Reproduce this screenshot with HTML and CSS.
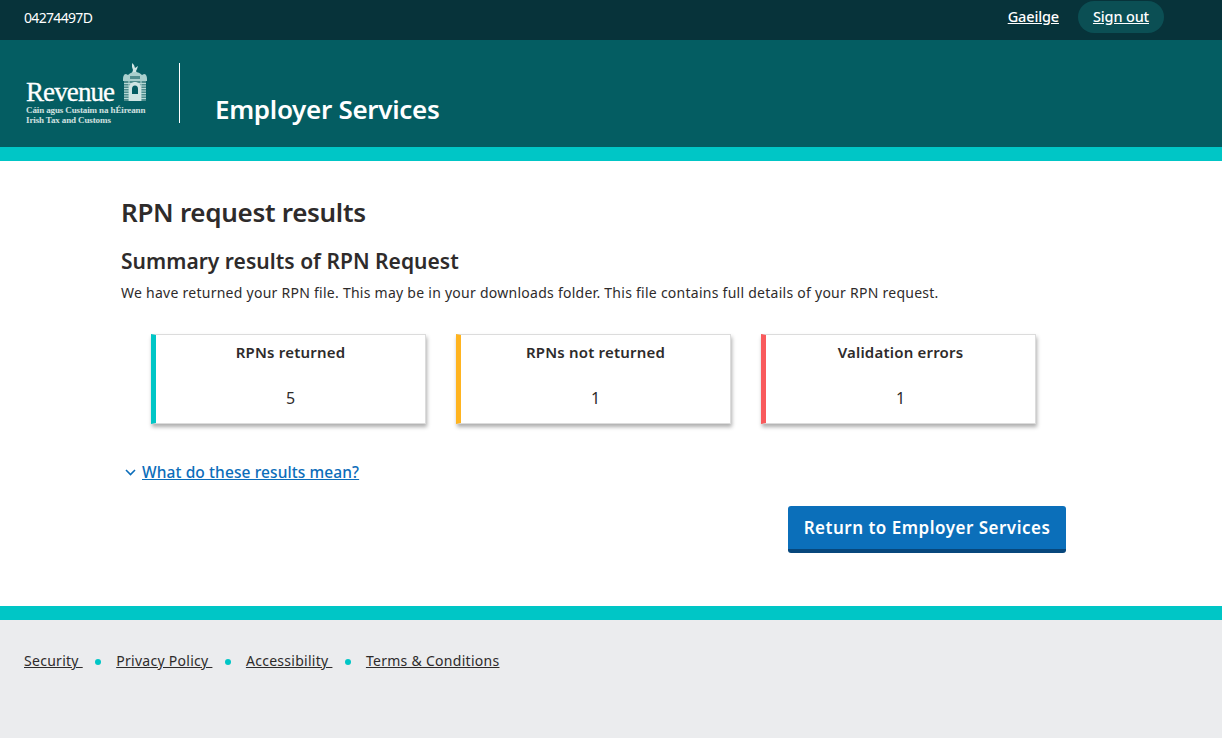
FILE: index.html
```html
<!DOCTYPE html>
<html lang="en">
<head>
<meta charset="utf-8">
<title>RPN request results</title>
<link rel="stylesheet" href="styles.css">
</head>
<body>
<div class="topbar">
  <span class="ppsn">04274497D</span>
  <nav class="topnav">
    <a href="#" class="toplink lang">Gaeilge</a>
    <a href="#" class="toplink signout">Sign out</a>
  </nav>
</div>
<header class="masthead">
  <div class="logo">
    <div class="logo-main">
      <span class="logo-word">Revenue</span>
      <svg class="logo-arch" width="26" height="39" viewBox="0 0 26 39">
        <path class="arch-light" d="M10 0l2 2 1 3 3-2-1 3-1 2 1 2h-5l1-3-1-3z"/>
        <path class="arch-stone" d="M1 16c0-3 1-5 3-5l2 1c2-2 4-3 7-3s5 1 7 3l2-1c2 0 3 2 3 5v2H1z"/>
        <path class="arch-shade" d="M8 13h10v3H8z"/>
        <path class="arch-body" d="M2 18h22v20H2z"/>
        <path class="arch-lines" d="M2 20.500h22M2 23h22M2 25.500h22M2 28h22M2 30.500h22M2 33h22M2 35.500h22M7 18v20M19 18v20"/>
        <path class="arch-ring" d="M7 38v-13c0-4 3-6 6-6s6 2 6 6v13z"/>
        <path class="arch-door" d="M10 26c0-2 1-3.500 3-3.500s3 1.500 3 3.500v5h-6z"/>
        <path class="arch-light" d="M10 31h6v2h-6zM16 35h2v2h-2z"/>
      </svg>
    </div>
    <div class="logo-sub">Cáin agus Custaim na hÉireann</div>
    <div class="logo-sub">Irish Tax and Customs</div>
  </div>
  <div class="service-name">Employer Services</div>
</header>
<div class="band"></div>
<main class="content">
  <h1 class="title">RPN request results</h1>
  <h2 class="subtitle">Summary results of RPN Request</h2>
  <p class="intro">We have returned your RPN file. This may be in your downloads folder. This file contains full details of your RPN request.</p>
  <section class="cards">
    <div class="card card-teal">
      <div class="card-title">RPNs returned</div>
      <div class="card-value">5</div>
    </div>
    <div class="card card-amber">
      <div class="card-title">RPNs not returned</div>
      <div class="card-value">1</div>
    </div>
    <div class="card card-red">
      <div class="card-title">Validation errors</div>
      <div class="card-value">1</div>
    </div>
  </section>
  <div class="disclosure">
    <svg class="chevron" width="11" height="7" viewBox="0 0 11 7"><path d="M1 1l4.500 4.500L10 1"/></svg>
    <a href="#" class="disclosure-link">What do these results mean?</a>
  </div>
  <div class="actions">
    <a href="#" class="button">Return to Employer Services</a>
  </div>
</main>
<div class="band"></div>
<footer class="footer">
  <a href="#" class="footlink">Security&nbsp;</a><span class="dot"></span>
  <a href="#" class="footlink">Privacy Policy&nbsp;</a><span class="dot"></span>
  <a href="#" class="footlink">Accessibility&nbsp;</a><span class="dot"></span>
  <a href="#" class="footlink">Terms &amp; Conditions</a>
</footer>
</body>
</html>
```
FILE: styles.css
```css
* { box-sizing: border-box; }
html, body { margin: 0; height: 100%; }
body {
  font-family: "Noto Sans", "Open Sans", sans-serif;
  color: #2e2b2b;
  background: #ebecee;
  overflow: hidden;
}
a { color: inherit; }
.topbar {
  height: 40px;
  background: #07333a;
  color: #fff;
  display: flex;
  align-items: center;
  justify-content: space-between;
  padding: 0 58px 6px 24px;
}
.ppsn { font-size: 14px; letter-spacing: -.67px; }
.topnav { display: flex; align-items: center; gap: 19px; }
.toplink { font-size: 14.5px; font-weight: 500; letter-spacing: -.15px; }
.lang { margin-bottom: 2px; }
.signout {
  background: #0b4f54;
  border-radius: 16px;
  padding: 5px 15px 7px;
  line-height: 20px;
}
.masthead {
  height: 107px;
  background: #045d62;
  color: #fff;
  display: flex;
  padding: 23px 0 0 26px;
}
.logo {
  width: 154px;
  height: 60px;
  border-right: 1px solid #fff;
  font-family: "Liberation Serif", serif;
  color: #e4f0ef;
}
.logo-main { display: flex; align-items: flex-end; gap: 8px; height: 39px; }
.logo-word { font-size: 27px; line-height: 24px; letter-spacing: -.9px; color: #fff; margin-bottom: -2px; -webkit-text-stroke: .3px #fff; }
.logo-arch { flex: none; }
.arch-light { fill: #cfe5e3; }
.arch-stone { fill: #a9d0cd; }
.arch-shade { fill: #4f8d8d; }
.arch-body { fill: #4f8d8d; }
.arch-lines { fill: none; stroke: #b7d8d5; stroke-width: 1; }
.arch-ring { fill: #cfe5e3; }
.arch-door { fill: #045d62; }
.logo-sub { font-size: 9px; line-height: 10px; white-space: nowrap; font-weight: 700; letter-spacing: -.12px; opacity: .9; }
.logo-main + .logo-sub { margin-top: 3px; }
.service-name {
  font-size: 26px;
  font-weight: 600;
  line-height: 34px;
  margin: 29px 0 0 35px;
  letter-spacing: -.3px;
}
.band { height: 14px; background: #00c6c6; }
.content {
  height: 445px;
  background: #fff;
  padding: 35px 0 0 121px;
}
.title { margin: 0; font-size: 26px; line-height: 32px; font-weight: 600; letter-spacing: -.3px; }
.subtitle { margin: 19px 0 0; font-size: 21px; line-height: 28px; font-weight: 600; letter-spacing: .03px; }
.intro { margin: 8px 0 0; font-size: 14px; line-height: 20px; letter-spacing: .26px; }
.cards { display: flex; gap: 30px; margin: 31px 0 0 30px; }
.card {
  width: 275px;
  height: 90px;
  background: #fff;
  border: 1px solid #dcdcdc;
  border-left: 5px solid;
  box-shadow: 1px 3px 4px rgba(0,0,0,.32);
  text-align: center;
  padding-top: 8px;
}
.card-teal { border-left-color: #00c6c6; }
.card-amber { border-left-color: #ffb420; }
.card-red { border-left-color: #f95a5c; }
.card-title { font-size: 15px; line-height: 19px; font-weight: 600; letter-spacing: .2px; }
.card-value { font-size: 16px; line-height: 22px; margin-top: 25px; }
.disclosure { display: flex; align-items: center; gap: 6px; margin: 37px 0 0 4px; }
.chevron { fill: none; stroke: #0b6dba; stroke-width: 1.6; }
.disclosure-link { font-size: 15.5px; line-height: 22px; font-weight: 500; color: #0b6dba; letter-spacing: .1px; }
.actions { display: flex; justify-content: flex-end; width: 945px; margin-top: 23px; }
.button {
  width: 278px;
  height: 47px;
  background: #0b6fba;
  border-bottom: 4px solid #07477c;
  border-radius: 3px;
  color: #fff;
  text-decoration: none;
  font-size: 17px;
  font-weight: 600;
  letter-spacing: .5px;
  display: flex;
  align-items: center;
  justify-content: center;
}
.footer {
  height: 118px;
  padding: 31px 0 0 24px;
  display: flex;
  align-items: flex-start;
  font-size: 14px;
  line-height: 20px;
}
.footlink { letter-spacing: .28px; }
.dot {
  width: 6px;
  height: 6px;
  margin: 8px 15px 0 12.5px;
  border-radius: 50%;
  background: #00c6c6;
}
```
